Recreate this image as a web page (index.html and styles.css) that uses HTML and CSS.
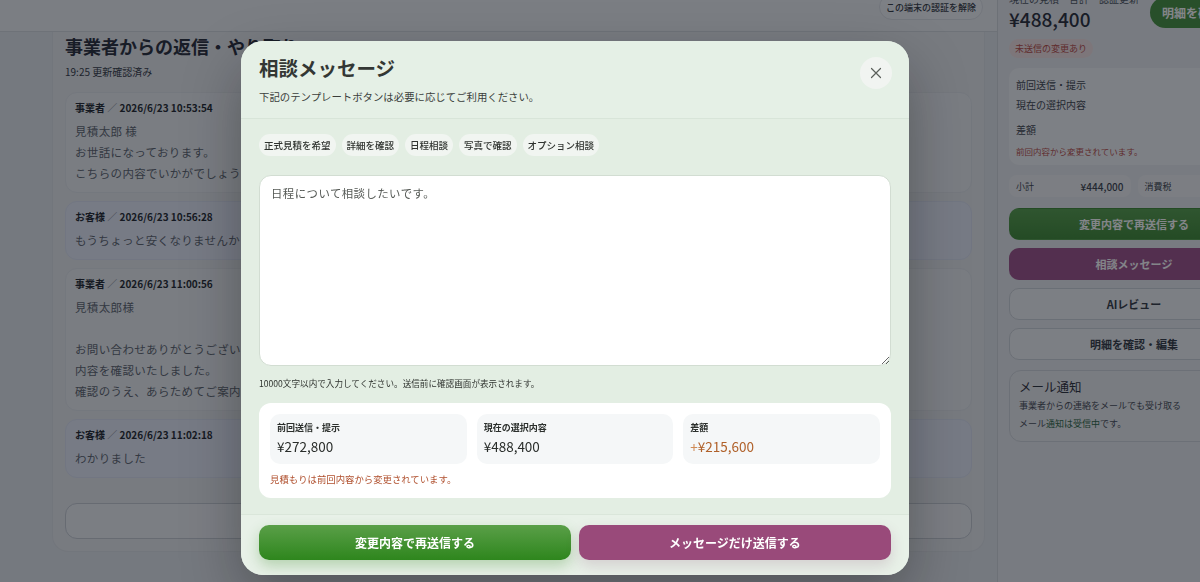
FILE: index.html
```html
<!DOCTYPE html>
<html lang="ja">
<head>
<meta charset="utf-8">
<title>相談メッセージ</title>
<link rel="stylesheet" href="styles.css">
</head>
<body>
<div class="page">
  <main class="main">
    <header class="topbar">
      <button class="btn-unauth" type="button">この端末の認証を解除</button>
    </header>
    <section class="thread">
      <h2 class="thread-title">事業者からの返信・やり取り</h2>
      <p class="thread-meta">19:25 更新確認済み</p>
      <div class="msgs">
        <article class="msg">
          <div class="msg-head">事業者 <span class="sep">／</span> 2026/6/23 10:53:54</div>
          <div class="msg-body">見積太郎 様
お世話になっております。
こちらの内容でいかがでしょうか。</div>
        </article>
        <article class="msg msg-customer">
          <div class="msg-head">お客様 <span class="sep">／</span> 2026/6/23 10:56:28</div>
          <div class="msg-body">もうちょっと安くなりませんか？</div>
        </article>
        <article class="msg">
          <div class="msg-head">事業者 <span class="sep">／</span> 2026/6/23 11:00:56</div>
          <div class="msg-body">見積太郎様

お問い合わせありがとうございます。
内容を確認いたしました。
確認のうえ、あらためてご案内いたします。</div>
        </article>
        <article class="msg msg-customer">
          <div class="msg-head">お客様 <span class="sep">／</span> 2026/6/23 11:02:18</div>
          <div class="msg-body">わかりました</div>
        </article>
      </div>
      <div class="reply-box"></div>
    </section>
  </main>

  <aside class="side">
    <div class="side-top">
      <div class="side-sum">
        <div class="side-cap">現在の見積・合計・認証更新済み</div>
        <div class="side-price">¥488,400</div>
      </div>
      <button class="btn-pill" type="button">明細を確認</button>
    </div>
    <span class="tag-warn">未送信の変更あり</span>
    <div class="cmp">
      <div class="cmp-row">前回送信・提示</div>
      <div class="cmp-row">現在の選択内容</div>
      <div class="cmp-row cmp-diff">差額</div>
      <p class="cmp-note">前回内容から変更されています。</p>
    </div>
    <div class="totals">
      <div class="total"><span>小計</span><b>¥444,000</b></div>
      <div class="total"><span>消費税</span><b>¥44,400</b></div>
    </div>
    <button class="sbtn sbtn-green" type="button">変更内容で再送信する</button>
    <button class="sbtn sbtn-purple" type="button">相談メッセージ</button>
    <button class="sbtn sbtn-plain" type="button">AIレビュー</button>
    <button class="sbtn sbtn-plain" type="button">明細を確認・編集</button>
    <div class="mail">
      <div class="mail-title">メール通知</div>
      <div class="mail-line">事業者からの連絡をメールでも受け取る</div>
      <div class="mail-line">メール<span class="mail-on">通知は受信中</span>です。</div>
    </div>
  </aside>
</div>

<div class="overlay">
  <div class="modal" role="dialog" aria-labelledby="consult-title">
    <div class="modal-head">
      <h1 class="modal-title" id="consult-title">相談メッセージ</h1>
      <p class="modal-sub">下記のテンプレートボタンは必要に応じてご利用ください。</p>
      <button class="modal-close" type="button" aria-label="閉じる">
        <svg width="12" height="12" viewBox="0 0 12 12"><path d="M1.5 1.5 L10.5 10.5 M10.5 1.5 L1.5 10.5" stroke="#5a5f5a" stroke-width="1.2" stroke-linecap="round" fill="none"/></svg>
      </button>
    </div>
    <div class="modal-body">
      <div class="templates">
        <button class="tpl" type="button">正式見積を希望</button>
        <button class="tpl" type="button">詳細を確認</button>
        <button class="tpl" type="button">日程相談</button>
        <button class="tpl" type="button">写真で確認</button>
        <button class="tpl" type="button">オプション相談</button>
      </div>
      <textarea class="msg-input">日程について相談したいです。</textarea>
      <p class="hint">10000文字以内で入力してください。送信前に確認画面が表示されます。</p>
      <div class="summary">
        <div class="sum-grid">
          <div class="sum-box">
            <div class="sum-label">前回送信・提示</div>
            <div class="sum-value">¥272,800</div>
          </div>
          <div class="sum-box">
            <div class="sum-label">現在の選択内容</div>
            <div class="sum-value">¥488,400</div>
          </div>
          <div class="sum-box">
            <div class="sum-label">差額</div>
            <div class="sum-value sum-up"><span class="plus">+</span>¥215,600</div>
          </div>
        </div>
        <p class="sum-note">見積もりは前回内容から変更されています。</p>
      </div>
    </div>
    <div class="modal-foot">
      <button class="fbtn fbtn-green" type="button">変更内容で再送信する</button>
      <button class="fbtn fbtn-purple" type="button">メッセージだけ送信する</button>
    </div>
  </div>
</div>
</body>
</html>
```

FILE: styles.css
```css
* { box-sizing: border-box; }

html, body {
  margin: 0;
  height: 100%;
}

body {
  font-family: "Noto Sans CJK JP", "Noto Sans", sans-serif;
  background: #e2e5e9;
  color: #1f2430;
  overflow: hidden;
}

button, textarea {
  font-family: inherit;
}

/* ---------- page behind the dialog ---------- */
.page {
  display: flex;
  width: 1200px;
  height: 582px;
  overflow: hidden;
}

.main {
  width: 997px;
  flex: none;
  display: flex;
  flex-direction: column;
}

.topbar {
  height: 32px;
  flex: none;
  background: #eef0f2;
  border-bottom: 1px solid #d3d7db;
  display: flex;
  justify-content: flex-end;
  padding-right: 14px;
}

.btn-unauth {
  margin-top: -6px;
  height: 26px;
  padding: 0 6px;
  border: 1px solid #dcdfe4;
  border-radius: 13px;
  background: #f3f4f6;
  color: #2a2f38;
  font-size: 9px;
  font-weight: 500;
}

.thread {
  margin: 0 12px 0 52px;
  padding: 2px 12px 12px;
  background: #e7e9ec;
  border: 1px solid #dcdfe3;
  border-top: none;
  border-radius: 0 0 16px 16px;
}

.thread-title {
  margin: 0;
  font-size: 18px;
  line-height: 24px;
  font-weight: 700;
  color: #1c2230;
}

.thread-meta {
  margin: 7px 0 13px;
  font-size: 10px;
  line-height: 14px;
  color: #2b303a;
}

.msgs {
  display: flex;
  flex-direction: column;
  gap: 8px;
}

.msg {
  padding: 8px 9px;
  background: #eceef1;
  border: 1px solid #e0e3e7;
  border-radius: 12px;
}

.msg-customer {
  background: #e6eaf7;
  border-color: #dbe0f0;
}

.msg-head {
  font-size: 10px;
  line-height: 14px;
  font-weight: 700;
  color: #161b26;
  margin-bottom: 6px;
}

.sep {
  font-weight: 400;
  color: #6b7180;
}

.msg-body {
  font-size: 11.5px;
  line-height: 21px;
  color: #565c67;
  white-space: pre-line;
  letter-spacing: 0.03em;
}

.reply-box {
  margin-top: 25px;
  height: 36px;
  border: 1px solid #c3c8cf;
  border-radius: 12px;
  background: #eff0f3;
}

/* ---------- sidebar ---------- */
.side {
  width: 274px;
  flex: none;
  border-left: 1px solid #d0d4d9;
  background: #e8eaed;
  padding: 0 12px 0 11px;
  display: flex;
  flex-direction: column;
  align-items: flex-start;
}

.side-top {
  width: 100%;
  display: flex;
  justify-content: space-between;
  align-items: flex-start;
  gap: 12px;
}

.side-sum {
  flex: 1;
  min-width: 0;
}

.side-cap {
  margin-top: -8px;
  font-size: 10px;
  line-height: 14px;
  color: #444a55;
  white-space: nowrap;
  overflow: hidden;
}

.side-price {
  font-size: 19px;
  line-height: 26px;
  font-weight: 500;
  color: #1d2330;
}

.btn-pill {
  flex: none;
  margin-top: -3px;
  height: 31px;
  width: 109px;
  border: none;
  border-radius: 16px;
  background: #3f8c35;
  color: #fff;
  font-size: 12px;
  font-weight: 700;
  text-align: left;
  padding-left: 12px;
}

.tag-warn {
  margin-top: 7px;
  height: 19px;
  padding: 0 6px;
  border-radius: 10px;
  background: #f3dfdf;
  color: #b3423a;
  font-size: 9px;
  line-height: 19px;
}

.cmp {
  margin-top: 10px;
  width: 100%;
  background: #f3f4f6;
  border-radius: 10px;
  padding: 7px 7px;
}

.cmp-row {
  font-size: 10px;
  line-height: 20px;
  color: #333944;
}

.cmp-diff {
  margin-top: 5px;
}

.cmp-note {
  margin: 4px 0 0;
  font-size: 8.5px;
  line-height: 14px;
  color: #b3423a;
}

.totals {
  margin-top: 10px;
  width: 100%;
  display: grid;
  grid-template-columns: 1fr 1fr;
  gap: 7px;
}

.total {
  height: 22px;
  padding: 0 7px;
  border-radius: 8px;
  background: #f0f1f3;
  display: flex;
  justify-content: space-between;
  align-items: center;
  font-size: 9px;
  color: #333944;
}

.total b {
  font-size: 10px;
  font-weight: 500;
}

.sbtn {
  width: 100%;
  height: 32px;
  border-radius: 10px;
  font-size: 11px;
  font-weight: 700;
  border: 1px solid transparent;
}

.sbtn-green {
  margin-top: 11px;
  background: linear-gradient(#4e9a42, #37842b);
  color: #fff;
}

.sbtn-purple {
  margin-top: 8px;
  background: #9a4a84;
  color: #fff;
}

.sbtn-plain {
  margin-top: 8px;
  background: #f1f2f4;
  border-color: #cbd0d6;
  color: #2a303a;
}

.mail {
  margin-top: 10px;
  width: 100%;
  padding: 6px 9px 8px;
  border: 1px solid #cfd3d9;
  border-radius: 12px;
  background: #eaecee;
}

.mail-title {
  font-size: 12.5px;
  line-height: 20px;
  color: #1f2430;
}

.mail-line {
  font-size: 9px;
  line-height: 18px;
  color: #3c424c;
}

.mail-on {
  color: #1e5e3a;
}

/* ---------- dialog ---------- */
.overlay {
  position: fixed;
  inset: 0;
  background: rgba(20, 24, 32, 0.53);
}

.modal {
  position: absolute;
  left: 241px;
  top: 41px;
  width: 668px;
  height: 534px;
  background: #e3eee3;
  border-radius: 22px;
  overflow: hidden;
  display: flex;
  flex-direction: column;
  box-shadow: 0 24px 60px rgba(0, 0, 0, 0.3);
}

.modal-head {
  position: relative;
  padding: 13px 18px 13px;
  background: #e5f0e6;
  border-bottom: 1px solid #d8e5d9;
}

.modal-title {
  margin: 0;
  font-size: 19.5px;
  line-height: 28px;
  font-weight: 700;
  color: #333734;
}

.modal-sub {
  margin: 7px 0 0;
  font-size: 10.4px;
  line-height: 16px;
  color: #3a3e3b;
}

.modal-close {
  position: absolute;
  right: 17px;
  top: 16px;
  width: 32px;
  height: 32px;
  border-radius: 50%;
  border: none;
  background: #f1f4f1;
  display: flex;
  align-items: center;
  justify-content: center;
  padding: 0;
}

.modal-body {
  flex: 1;
  padding: 15px 18px;
  display: flex;
  flex-direction: column;
}

.templates {
  display: flex;
  gap: 6px;
}

.tpl {
  height: 22px;
  padding: 0 5px;
  border: none;
  border-radius: 11px;
  background: #f1f5f1;
  color: #2f332f;
  font-size: 9.5px;
  font-weight: 500;
}

.msg-input {
  margin-top: 19px;
  width: 100%;
  height: 191px;
  padding: 8px 11px;
  border: 1px solid #d2ddd2;
  border-radius: 12px;
  background: #fff;
  color: #565a56;
  font-size: 11.4px;
  line-height: 18px;
  letter-spacing: 0.04em;
  outline: none;
}

.hint {
  margin: 10px 0 13px;
  font-size: 8.6px;
  line-height: 14px;
  color: #2f332f;
}

.summary {
  background: #fff;
  border-radius: 12px;
  padding: 11px 11px 12px;
}

.sum-grid {
  display: grid;
  grid-template-columns: repeat(3, 1fr);
  gap: 10px;
}

.sum-box {
  height: 50px;
  padding: 7px 7px 0;
  background: #f5f7f8;
  border-radius: 10px;
}

.sum-label {
  font-size: 9px;
  line-height: 14px;
  font-weight: 700;
  color: #2c302d;
}

.sum-value {
  margin-top: 2px;
  font-size: 13.5px;
  line-height: 19px;
  color: #2a2e2b;
}

.sum-up {
  color: #b0612a;
}

.plus {
  color: #d08a55;
}

.sum-note {
  margin: 8px 0 0;
  font-size: 9.4px;
  line-height: 14px;
  color: #b0502e;
}

.modal-foot {
  padding: 10px 18px 15px;
  background: #e8f1e8;
  border-top: 1px solid #dae6da;
  display: grid;
  grid-template-columns: 1fr 1fr;
  gap: 8px;
}

.fbtn {
  height: 35px;
  border: none;
  border-radius: 10px;
  color: #fff;
  font-size: 12px;
  font-weight: 700;
}

.fbtn-green {
  background: linear-gradient(#5a9f48, #2e861d);
  box-shadow: 0 6px 14px rgba(62, 140, 45, 0.3);
}

.fbtn-purple {
  background: #994a7a;
  box-shadow: 0 6px 14px rgba(120, 60, 100, 0.18);
}
```
